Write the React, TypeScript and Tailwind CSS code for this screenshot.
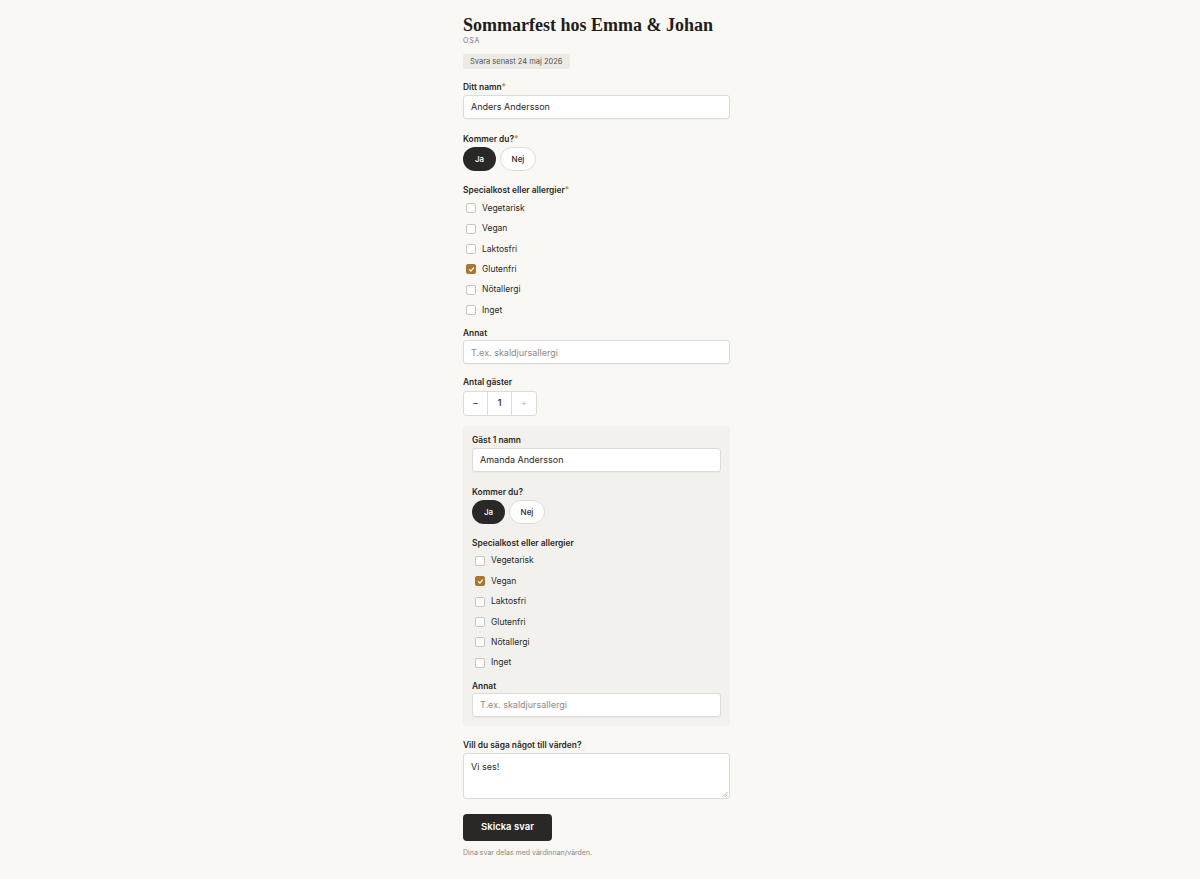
import React from "react";

const sans = { fontFamily: "Inter, 'Noto Sans', sans-serif" };

function Label({ children, req, mb = "mb-[2px]" }: { children: React.ReactNode; req?: boolean; mb?: string }) {
  return (
    <div className={`text-[8.4px] font-semibold leading-[12px] text-[#2a2826] ${mb}`}>
      {children}
      {req && <span className="text-[#c08440]">*</span>}
    </div>
  );
}

function Input({ value, placeholder }: { value?: string; placeholder?: string }) {
  return (
    <div className="h-[24px] w-full rounded-[3px] border border-[#dedbd5] bg-white px-[7px] flex items-center text-[9px] shadow-[0_1px_1px_rgba(0,0,0,0.03)]">
      {value ? (
        <span className="text-[#2a2826]">{value}</span>
      ) : (
        <span className="text-[#8d8a85]">{placeholder}</span>
      )}
    </div>
  );
}

function Pills() {
  return (
    <div className="flex gap-[4px]">
      <div className="h-[24px] w-[33px] rounded-full bg-[#2a2826] text-white text-[8px] font-medium flex items-center justify-center">
        Ja
      </div>
      <div className="h-[24px] w-[36px] rounded-full bg-white border border-[#dedbd5] text-[#2a2826] text-[8px] font-medium flex items-center justify-center">
        Nej
      </div>
    </div>
  );
}

const options = ["Vegetarisk", "Vegan", "Laktosfri", "Glutenfri", "Nötallergi", "Inget"];

function Checks({ checked }: { checked: string }) {
  return (
    <div className="flex flex-col">
      {options.map((o) => (
        <div key={o} className="h-[20.4px] flex items-center gap-[6px] pl-[3px]">
          {o === checked ? (
            <div className="w-[10px] h-[10px] rounded-[2px] bg-[#a9762f] flex items-center justify-center">
              <svg width="7" height="7" viewBox="0 0 10 10">
                <path d="M2 5.2 L4.2 7.3 L8 2.8" fill="none" stroke="white" strokeWidth="1.8" strokeLinecap="round" strokeLinejoin="round" />
              </svg>
            </div>
          ) : (
            <div className="w-[10px] h-[10px] rounded-[2px] bg-white border border-[#c9c6c0]" />
          )}
          <span className="text-[8.5px] text-[#2a2826]">{o}</span>
        </div>
      ))}
    </div>
  );
}

export default function App() {
  return (
    <div className="min-h-[879px] w-full bg-[#f9f8f5]" style={sans}>
      <div className="w-[274px] mx-auto pr-[7px] pt-[14px] pb-[20px]">
        <h1
          className="text-[18px] font-bold leading-[22px] text-[#1f1d1b] whitespace-nowrap"
          style={{ fontFamily: "'Liberation Serif', Georgia, serif" }}
        >
          Sommarfest hos Emma &amp; Johan
        </h1>
        <div className="text-[7px] tracking-[0.8px] text-[#7a7772] leading-[10px]">OSA</div>
        <div className="mt-[7px] inline-flex h-[15px] items-center rounded-[2px] bg-[#eceae5] px-[7px] text-[7.5px] text-[#55524d]">
          Svara senast 24 maj 2026
        </div>

        <div className="mt-[11px]">
          <Label req>Ditt namn</Label>
          <Input value="Anders Andersson" />
        </div>

        <div className="mt-[14px]">
          <Label req>Kommer du?</Label>
          <Pills />
        </div>

        <div className="mt-[13px]">
          <Label req>Specialkost eller allergier</Label>
          <Checks checked="Glutenfri" />
        </div>

        <div className="mt-[7px]">
          <Label mb="mb-[1px]">Annat</Label>
          <Input placeholder="T.ex. skaldjursallergi" />
        </div>

        <div className="mt-[12px]">
          <Label mb="mb-0">Antal gäster</Label>
          <div className="inline-flex h-[25px] rounded-[3px] border border-[#dedbd5] bg-white text-[9px]">
            <div className="w-[24px] flex items-center justify-center text-[#2a2826] border-r border-[#dedbd5]">–</div>
            <div className="w-[24px] flex items-center justify-center text-[#2a2826] font-medium border-r border-[#dedbd5]">1</div>
            <div className="w-[24px] flex items-center justify-center text-[#c4c1bb]">+</div>
          </div>
        </div>

        <div className="mt-[10px] rounded-[4px] bg-[#f3f1ed] px-[9px] pt-[8px] pb-[9px]">
          <Label>Gäst 1 namn</Label>
          <Input value="Amanda Andersson" />
          <div className="mt-[14px]">
            <Label>Kommer du?</Label>
            <Pills />
          </div>
          <div className="mt-[13px]">
            <Label>Specialkost eller allergier</Label>
            <Checks checked="Vegan" />
          </div>
          <div className="mt-[7px]">
            <Label mb="mb-[1px]">Annat</Label>
            <Input placeholder="T.ex. skaldjursallergi" />
          </div>
        </div>

        <div className="mt-[13px]">
          <Label>Vill du säga något till värden?</Label>
          <div className="relative h-[46px] w-full rounded-[3px] border border-[#dedbd5] bg-white px-[7px] pt-[6px] text-[9px] text-[#2a2826]">
            Vi ses!
            <svg className="absolute right-[1px] bottom-[1px]" width="6" height="6" viewBox="0 0 6 6">
              <path d="M5.5 1 L1 5.5 M5.5 3.5 L3.5 5.5" stroke="#9a978f" strokeWidth="0.7" />
            </svg>
          </div>
        </div>

        <button className="mt-[15px] h-[27px] w-[89px] rounded-[4px] bg-[#2a2826] text-white text-[9.5px] font-semibold">
          Skicka svar
        </button>
        <div className="mt-[7px] text-[7px] text-[#8a8782]">Dina svar delas med värdinnan/värden.</div>
      </div>
    </div>
  );
}
